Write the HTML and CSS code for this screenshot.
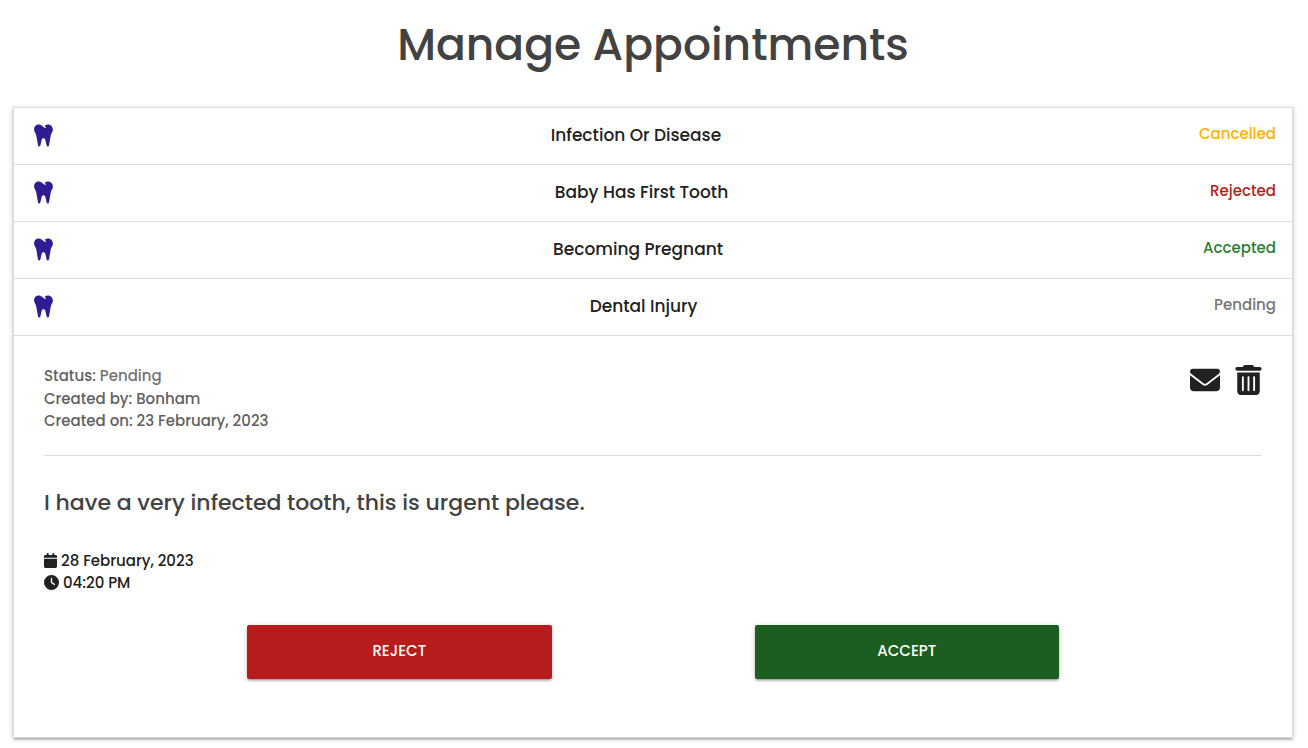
FILE: index.html
```html
<!DOCTYPE html>
<html lang="en">
<head>
<meta charset="utf-8">
<meta name="viewport" content="width=device-width, initial-scale=1">
<title>Manage Appointments</title>
<link rel="stylesheet" href="styles.css">
</head>
<body>
<svg class="sprite" aria-hidden="true">
  <symbol id="tooth" viewBox="0 0 448 512"><path d="M186.100 52.100C169.300 39.100 148.700 32 127.500 32C74.700 32 32 74.700 32 127.500v6.200c0 15.800 3.700 31.300 10.700 45.500l23.500 47.100c4.500 8.900 7.600 18.400 9.400 28.200l36.700 205.800c2 11.200 11.600 19.400 22.900 19.800s21.400-7.400 24-18.400l28.900-121.300C192.200 323.700 207 312 224 312s31.800 11.700 35.800 28.300l28.900 121.300c2.600 11.100 12.700 18.800 24 18.400s21-8.600 22.900-19.800l36.700-205.800c1.800-9.800 4.900-19.300 9.400-28.200l23.500-47.100c7.100-14.100 10.700-29.700 10.700-45.500v-2.100c0-55-44.600-99.600-99.600-99.600c-24.100 0-47.400 8.800-65.600 24.600l-3.200 2.800l19.500 15.200c7 5.400 8.200 15.500 2.800 22.500s-15.500 8.200-22.500 2.800l-24.400-19z"/></symbol>
  <symbol id="envelope" viewBox="0 0 512 512"><path d="M48 64C21.500 64 0 85.500 0 112c0 15.100 7.100 29.300 19.200 38.400L236.800 313.600c11.400 8.500 27 8.500 38.400 0L492.800 150.400c12.100-9.100 19.200-23.300 19.200-38.400c0-26.500-21.500-48-48-48H48zM0 176V384c0 35.300 28.700 64 64 64H448c35.300 0 64-28.700 64-64V176L294.400 339.200c-22.800 17.100-54 17.100-76.800 0L0 176z"/></symbol>
  <symbol id="trash" viewBox="0 0 448 512"><path d="M135.200 17.700C140.600 6.800 151.700 0 163.800 0H284.200c12.100 0 23.200 6.800 28.600 17.700L320 32h96c17.700 0 32 14.300 32 32s-14.300 32-32 32H32C14.300 96 0 81.700 0 64S14.300 32 32 32h96l7.200-14.300zM32 128H416V448c0 35.300-28.700 64-64 64H96c-35.300 0-64-28.700-64-64V128zm96 64c-8.800 0-16 7.200-16 16V432c0 8.800 7.200 16 16 16s16-7.200 16-16V208c0-8.800-7.200-16-16-16zm96 0c-8.800 0-16 7.200-16 16V432c0 8.800 7.200 16 16 16s16-7.200 16-16V208c0-8.800-7.200-16-16-16zm96 0c-8.800 0-16 7.200-16 16V432c0 8.800 7.200 16 16 16s16-7.200 16-16V208c0-8.800-7.200-16-16-16z"/></symbol>
  <symbol id="calendar" viewBox="0 0 448 512"><path d="M96 32V64H48C21.500 64 0 85.500 0 112v48H448V112c0-26.500-21.500-48-48-48H352V32c0-17.700-14.300-32-32-32s-32 14.300-32 32V64H160V32c0-17.700-14.300-32-32-32S96 14.300 96 32zM448 192H0V464c0 26.500 21.500 48 48 48H400c26.500 0 48-21.500 48-48V192z"/></symbol>
  <symbol id="clock" viewBox="0 0 512 512"><path d="M256 0a256 256 0 1 1 0 512A256 256 0 1 1 256 0zM232 120V256c0 8 4 15.500 10.700 20l96 64c11 7.400 25.900 4.400 33.300-6.700s4.400-25.900-6.700-33.300L280 243.200V120c0-13.300-10.700-24-24-24s-24 10.700-24 24z"/></symbol>
</svg>
<main class="page">
  <h1 class="page-title">Manage Appointments</h1>
  <ul class="appointments">
    <li class="appointment">
      <button type="button" class="appointment-header">
        <svg class="tooth-icon" aria-hidden="true"><use href="#tooth"/></svg>
        <span class="subject">Infection Or Disease</span>
        <span class="status cancelled">Cancelled</span>
      </button>
    </li>
    <li class="appointment">
      <button type="button" class="appointment-header">
        <svg class="tooth-icon" aria-hidden="true"><use href="#tooth"/></svg>
        <span class="subject">Baby Has First Tooth</span>
        <span class="status rejected">Rejected</span>
      </button>
    </li>
    <li class="appointment">
      <button type="button" class="appointment-header">
        <svg class="tooth-icon" aria-hidden="true"><use href="#tooth"/></svg>
        <span class="subject">Becoming Pregnant</span>
        <span class="status accepted">Accepted</span>
      </button>
    </li>
    <li class="appointment">
      <button type="button" class="appointment-header" aria-expanded="true">
        <svg class="tooth-icon" aria-hidden="true"><use href="#tooth"/></svg>
        <span class="subject">Dental Injury</span>
        <span class="status pending">Pending</span>
      </button>
      <div class="appointment-body">
        <div class="summary">
          <div class="meta">
            <p>Status: <span class="pending">Pending</span></p>
            <p>Created by: Bonham</p>
            <p>Created on: 23 February, 2023</p>
          </div>
          <div class="tools">
            <a href="#message" aria-label="Send message"><svg class="envelope-icon" aria-hidden="true"><use href="#envelope"/></svg></a>
            <a href="#delete" aria-label="Delete appointment"><svg class="trash-icon" aria-hidden="true"><use href="#trash"/></svg></a>
          </div>
        </div>
        <h2 class="message">I have a very infected tooth, this is urgent please.</h2>
        <div class="schedule">
          <p><svg class="calendar-icon" aria-hidden="true"><use href="#calendar"/></svg>28 February, 2023</p>
          <p><svg class="clock-icon" aria-hidden="true"><use href="#clock"/></svg>04:20 PM</p>
        </div>
        <div class="actions">
          <button type="button" class="action reject">Reject</button>
          <button type="button" class="action accept">Accept</button>
        </div>
      </div>
    </li>
  </ul>
</main>
</body>
</html>
```
FILE: styles.css
```css
* {
  box-sizing: border-box;
}

body {
  margin: 0;
  background: #fff;
  color: #212121;
  font: 500 15px/1.5 Poppins, Inter, "Open Sans", sans-serif;
}

p,
h1,
h2,
ul {
  margin: 0;
  padding: 0;
}

button {
  font: inherit;
  cursor: pointer;
}

svg {
  fill: currentColor;
}

.sprite {
  position: absolute;
  width: 0;
  height: 0;
}

.page {
  padding: 20px 15px 10px 13px;
}

.page-title {
  margin-bottom: 37px;
  color: #424242;
  font-size: 44px;
  font-weight: 500;
  line-height: 50px;
  text-align: center;
}

.appointments {
  list-style: none;
  border: 1px solid #ddd;
  border-bottom: 0;
  box-shadow: 0 2px 2px 0 rgba(0, 0, 0, 0.14), 0 3px 1px -2px rgba(0, 0, 0, 0.12), 0 1px 5px 0 rgba(0, 0, 0, 0.2);
}

.appointment-header {
  display: flex;
  justify-content: space-between;
  align-items: flex-start;
  width: 100%;
  height: 57px;
  padding: 14px 16px;
  border: 0;
  border-bottom: 1px solid #ddd;
  background: #fff;
  color: #212121;
}

.tooth-icon {
  width: 27px;
  height: 25px;
  margin-right: 16px;
  margin-top: 1px;
  color: #311b92;
}

.subject {
  font-size: 17px;
  line-height: 26px;
}

.status {
  line-height: 24px;
}

.cancelled {
  color: #ffb300;
}

.rejected {
  color: #b71c1c;
}

.accepted {
  color: #2e7d32;
}

.pending {
  color: #757575;
}

.appointment-body {
  padding: 29px 30px 58px;
  border-bottom: 1px solid #ddd;
}

.summary {
  display: flex;
  justify-content: space-between;
  align-items: flex-start;
  padding-bottom: 22px;
  border-bottom: 1px solid #ddd;
}

.meta {
  color: #616161;
}

.tools {
  display: flex;
  gap: 15px;
}

.tools a {
  display: flex;
  color: #212121;
}

.envelope-icon {
  width: 30px;
  height: 30px;
}

.trash-icon {
  width: 27px;
  height: 30px;
}

.message {
  margin: 30px 0;
  color: #424242;
  font-size: 22px;
  font-weight: 500;
  line-height: 34px;
}

.schedule svg {
  height: 15px;
  margin-right: 4px;
  vertical-align: -2px;
}

.calendar-icon {
  width: 13px;
}

.clock-icon {
  width: 15px;
}

.actions {
  display: flex;
  justify-content: space-evenly;
  margin-top: 30px;
}

.action {
  width: 25%;
  height: 54px;
  border: 0;
  border-radius: 2px;
  color: #fff;
  text-transform: uppercase;
  box-shadow: 0 2px 2px 0 rgba(0, 0, 0, 0.14), 0 3px 1px -2px rgba(0, 0, 0, 0.12), 0 1px 5px 0 rgba(0, 0, 0, 0.2);
}

.reject {
  background: #b71c1c;
}

.accept {
  background: #1b5e20;
}
```
